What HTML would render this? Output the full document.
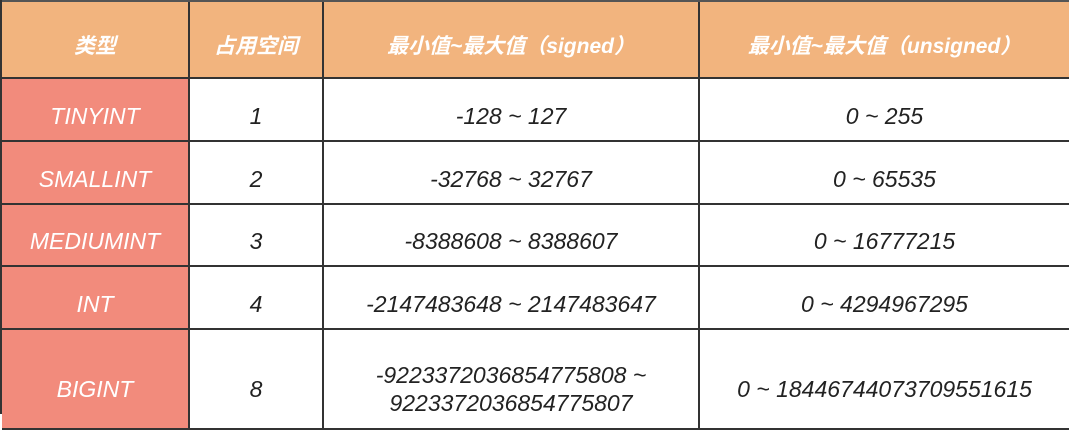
<!DOCTYPE html>
<html><head><meta charset="utf-8"><style>
html,body{margin:0;width:1069px;height:414px;overflow:hidden;background:#fff;font-family:"Liberation Sans","Noto Sans CJK SC",sans-serif}
.c{position:absolute;display:flex;align-items:center;justify-content:center;text-align:center;box-sizing:border-box;border-right:2px solid #333;border-bottom:2px solid #333;font-style:italic;font-size:23px;color:#222;line-height:28px;padding-top:12px}
.h{background:#f2b47e;color:#fff;font-weight:bold;font-size:21px;padding-top:14px}
.f{background:#f28b7c;color:#fff}
</style></head><body>
<div style="position:absolute;left:0;top:0;width:1069px;height:2px;background:#555"></div>
<div style="position:absolute;left:0;top:0;width:2px;height:414px;background:#333"></div>
<div class="c h" style="left:2px;top:2px;width:188px;height:77px">类型</div>
<div class="c h" style="left:190px;top:2px;width:134px;height:77px">占用空间</div>
<div class="c h" style="left:324px;top:2px;width:376px;height:77px">最小值~最大值（signed）</div>
<div class="c h" style="left:700px;top:2px;width:369px;height:77px;border-right:none">最小值~最大值（unsigned）</div>

<div class="c f" style="left:2px;top:79px;width:188px;height:63px">TINYINT</div>
<div class="c" style="left:190px;top:79px;width:134px;height:63px">1</div>
<div class="c" style="left:324px;top:79px;width:376px;height:63px">-128 ~ 127</div>
<div class="c" style="left:700px;top:79px;width:369px;height:63px;border-right:none">0 ~ 255</div>

<div class="c f" style="left:2px;top:142px;width:188px;height:63px">SMALLINT</div>
<div class="c" style="left:190px;top:142px;width:134px;height:63px">2</div>
<div class="c" style="left:324px;top:142px;width:376px;height:63px">-32768 ~ 32767</div>
<div class="c" style="left:700px;top:142px;width:369px;height:63px;border-right:none">0 ~ 65535</div>

<div class="c f" style="left:2px;top:205px;width:188px;height:62px">MEDIUMINT</div>
<div class="c" style="left:190px;top:205px;width:134px;height:62px">3</div>
<div class="c" style="left:324px;top:205px;width:376px;height:62px">-8388608 ~ 8388607</div>
<div class="c" style="left:700px;top:205px;width:369px;height:62px;border-right:none">0 ~ 16777215</div>

<div class="c f" style="left:2px;top:267px;width:188px;height:63px">INT</div>
<div class="c" style="left:190px;top:267px;width:134px;height:63px">4</div>
<div class="c" style="left:324px;top:267px;width:376px;height:63px">-2147483648 ~ 2147483647</div>
<div class="c" style="left:700px;top:267px;width:369px;height:63px;border-right:none">0 ~ 4294967295</div>

<div class="c f" style="left:2px;top:330px;width:188px;height:100px;padding-top:20px">BIGINT</div>
<div class="c" style="left:190px;top:330px;width:134px;height:100px;padding-top:20px">8</div>
<div class="c" style="left:324px;top:330px;width:376px;height:100px;padding-top:20px">-9223372036854775808 ~<br>9223372036854775807</div>
<div class="c" style="left:700px;top:330px;width:369px;height:100px;padding-top:20px;border-right:none">0 ~ 18446744073709551615</div>
</body></html>
